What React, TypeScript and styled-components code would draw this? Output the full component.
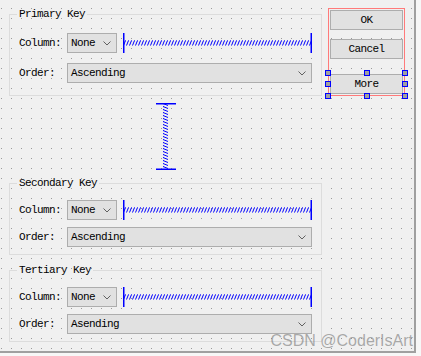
import { useId } from 'react';
import styled, { createGlobalStyle } from 'styled-components';

const GlobalStyle = createGlobalStyle`
	html, body {
		margin: 0;
		background: #f7f7f7;
	}
	body {
		font-family: 'Liberation Mono', 'DejaVu Sans Mono', monospace;
		font-size: 11px;
		letter-spacing: -0.6px;
		color: #000;
	}
`;

const SPRING = '#0000ff';

function HSpring() {
	const id = useId();
	return (
		<HSpringSvg height="20">
			<defs>
				<pattern id={id} width="3" height="20" patternUnits="userSpaceOnUse">
					<path d="M0.5 12.5 L2.5 7.5" fill="none" stroke={SPRING} strokeWidth="1" />
					<path d="M2.5 7.5 L3 8.5" fill="none" stroke={SPRING} strokeWidth="0.6" />
				</pattern>
			</defs>
			<rect x="0" y="0" width="100%" height="20" fill={`url(#${id})`} />
			<rect x="0" y="0" width="1.5" height="20" fill={SPRING} />
			<rect x="100%" y="0" width="1.5" height="20" transform="translate(-1.5 0)" fill={SPRING} />
		</HSpringSvg>
	);
}

function VSpring() {
	const id = useId();
	return (
		<svg width="20" height="67">
			<defs>
				<pattern id={id} width="20" height="3" patternUnits="userSpaceOnUse">
					<path d="M7 0.5 L12 2.5" fill="none" stroke={SPRING} strokeWidth="1" />
					<path d="M7 0.5 L8 0" fill="none" stroke={SPRING} strokeWidth="0.6" />
				</pattern>
			</defs>
			<rect x="0" y="1" width="20" height="65" fill={`url(#${id})`} />
			<rect x="0" y="0" width="20" height="1.5" fill={SPRING} />
			<rect x="0" y="65.5" width="20" height="1.5" fill={SPRING} />
		</svg>
	);
}

function Chevron() {
	return (
		<svg width="8" height="5" viewBox="0 0 8 5">
			<path d="M0.5 0.5 L4 4 L7.5 0.5" fill="none" stroke="#606060" strokeWidth="1" />
		</svg>
	);
}

type SortKeyProps = {
	title: string;
	order: string;
	roomy?: boolean;
};
function SortKeyBox({ title, order, roomy }: SortKeyProps) {
	return (
		<GroupBox>
			<Legend>{title}</Legend>
			<Rows $roomy={roomy}>
				<Row>
					<Label>Column:</Label>
					<ColumnCell>
						<Combo $width={50}>
							<span>None</span>
							<Chevron />
						</Combo>
						<HSpring />
					</ColumnCell>
				</Row>
				<Row>
					<Label>Order:</Label>
					<Combo>
						<span>{order}</span>
						<Chevron />
					</Combo>
				</Row>
			</Rows>
		</GroupBox>
	);
}

type HX = 'l' | 'c' | 'r';
type HY = 't' | 'm' | 'b';

const handles: [HX, HY][] = [
	['l', 't'], ['c', 't'], ['r', 't'],
	['l', 'm'], ['r', 'm'],
	['l', 'b'], ['c', 'b'], ['r', 'b'],
];

export default function App() {
	return (
		<>
			<GlobalStyle />
			<Form>
				<LeftColumn>
					<SortKeyBox title="Primary Key" order="Ascending" roomy />
					<VSpacer>
						<VSpring />
					</VSpacer>
					<SortKeyBox title="Secondary Key" order="Ascending" />
					<Gap />
					<SortKeyBox title="Tertiary Key" order="Asending" />
				</LeftColumn>
				<ButtonLayout>
					<PushButton>OK</PushButton>
					<PushButton $spaceAbove={9}>Cancel</PushButton>
					<Selected $spaceAbove={15}>
						<PushButton>More</PushButton>
						{handles.map(([x, y]) => (
							<Handle key={x + y} $x={x} $y={y} />
						))}
					</Selected>
				</ButtonLayout>
				<Watermark>CSDN @CoderIsArt</Watermark>
			</Form>
		</>
	);
}

const Form = styled.div`
	position: relative;
	box-sizing: border-box;
	width: 416px;
	height: 353px;
	padding: 8px 0 0 9px;
	display: grid;
	grid-template-columns: 313px 77px;
	column-gap: 6px;
	align-items: start;
	background-color: #f0f0f0;
	background-image: conic-gradient(from 270deg at 1px 1px, #9a9a9a 90deg, transparent 0);
	background-size: 10px 10px;
	background-position: 1px 8px;
	border-right: 2px solid #a0a0a0;
	border-bottom: 2px solid #a0a0a0;
`;

const LeftColumn = styled.div`
	display: flex;
	flex-direction: column;
	min-width: 0;
`;

const GroupBox = styled.fieldset`
	margin: 0;
	min-width: 0;
	padding: 0 9px;
	border: 1px solid #dcdcdc;
`;

const Legend = styled.legend`
	margin-left: -2px;
	padding: 0 2px;
	line-height: 12px;
	font-size: 11px;
`;

const Rows = styled.div<{ $roomy?: boolean }>`
	display: flex;
	flex-direction: column;
	gap: ${p => (p.$roomy ? '10px' : '7px')};
	padding-top: ${p => (p.$roomy ? '13px' : '11px')};
	padding-bottom: ${p => (p.$roomy ? '12px' : '7px')};
`;

const Row = styled.div`
	display: grid;
	grid-template-columns: 48px minmax(0, 1fr);
	align-items: center;
	height: 20px;
`;

const Label = styled.span`
	white-space: nowrap;
`;

const ColumnCell = styled.div`
	display: flex;
	align-items: center;
	gap: 6px;
	min-width: 0;
`;

const Combo = styled.div<{ $width?: number }>`
	box-sizing: border-box;
	flex: none;
	width: ${p => (p.$width ? `${p.$width}px` : '100%')};
	height: 20px;
	display: flex;
	align-items: center;
	justify-content: space-between;
	padding: 0 5px 0 3px;
	background: #e1e1e1;
	border: 1px solid #adadad;
	white-space: nowrap;
`;

const HSpringSvg = styled.svg`
	flex: 1 1 0;
	width: 0;
	min-width: 0;
	display: block;
`;

const VSpacer = styled.div`
	height: 81px;
	box-sizing: border-box;
	padding-top: 7px;
	display: flex;
	justify-content: center;
	& > svg {
		margin-left: 1px;
	}
`;

const Gap = styled.div`
	height: 9px;
`;

const ButtonLayout = styled.div`
	display: flex;
	flex-direction: column;
	padding: 1px;
	border: 1px solid #ff7a7a;
`;

const PushButton = styled.button<{ $spaceAbove?: number }>`
	box-sizing: border-box;
	width: 100%;
	height: 20px;
	margin: ${p => p.$spaceAbove || 0}px 0 0 0;
	padding: 0;
	font-family: 'Liberation Mono', 'DejaVu Sans Mono', monospace;
	font-size: 11px;
	letter-spacing: -0.6px;
	color: #000;
	background: #e1e1e1;
	border: 1px solid #adadad;
	border-radius: 0;
`;

const Selected = styled.div<{ $spaceAbove?: number }>`
	position: relative;
	margin-top: ${p => p.$spaceAbove || 0}px;
	& > ${PushButton} {
		display: block;
	}
`;

const Handle = styled.span<{ $x: HX; $y: HY }>`
	position: absolute;
	box-sizing: border-box;
	width: 6px;
	height: 6px;
	background: #a0a0a0;
	border: 1px solid #0000ff;
	left: ${p => (p.$x === 'l' ? '-5px' : p.$x === 'c' ? 'calc(50% - 3px)' : 'calc(100% - 1px)')};
	top: ${p => (p.$y === 't' ? '-4px' : p.$y === 'm' ? 'calc(50% - 3px)' : 'calc(100% - 1px)')};
`;

const Watermark = styled.div`
	position: absolute;
	right: 1px;
	bottom: 1px;
	font-family: 'Liberation Sans', Arial, sans-serif;
	font-size: 16px;
	letter-spacing: 0;
	line-height: 18px;
	color: rgba(120, 120, 120, 0.6);
	white-space: nowrap;
	pointer-events: none;
`;
